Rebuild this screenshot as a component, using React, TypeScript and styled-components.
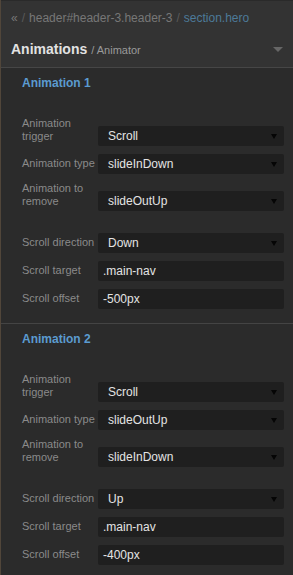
import * as React from "react";
import styled, { createGlobalStyle } from "styled-components";

const GlobalStyle = createGlobalStyle`
  html, body {
    margin: 0;
    padding: 0;
    background: #2b2b2b;
  }
  body {
    font-family: "Liberation Sans", Arial, sans-serif;
  }
`;

const Panel = styled.div`
  width: 293px;
  min-height: 575px;
  box-sizing: border-box;
  background: #2b2b2b;
  border-left: 1px solid #51463a;
`;

const Header = styled.div`
  background: #333333;
  border-top: 1px solid #2a2a2a;
  border-bottom: 1px solid #464646;
  padding: 9px 10px 0 10px;
  height: 57px;
`;

const Crumbs = styled.div`
  font-size: 12px;
  line-height: 16px;
  color: #777;
  white-space: nowrap;
`;

const Sep = styled.span`
  color: #5a5a5a;
  margin: 0 4px;
`;

const Current = styled.span`
  color: #4d7a99;
`;

const TitleRow = styled.div`
  display: flex;
  align-items: center;
  justify-content: space-between;
  margin-top: 14px;
`;

const Title = styled.div`
  font-size: 14px;
  font-weight: bold;
  color: #e2e2e2;
  line-height: 18px;
`;

const Sub = styled.span`
  font-size: 11px;
  font-weight: normal;
  color: #9a9a9a;
  margin-left: 4px;
`;

const Caret = styled.div`
  width: 0;
  height: 0;
  border-left: 5px solid transparent;
  border-right: 5px solid transparent;
  border-top: 5px solid #666;
`;

const Section = styled.section<{ $last?: boolean }>`
  padding: 7px 9px 14px 21px;
  border-bottom: ${(p) => (p.$last ? "none" : "1px solid #444")};
`;

const Heading = styled.h3`
  margin: 0 0 26px 0;
  font-size: 12px;
  line-height: 16px;
  font-weight: bold;
  color: #5b9bd0;
`;

const Rows = styled.div`
  display: flex;
  flex-direction: column;
  gap: 8px;
`;

const Spacer = styled.div`
  height: 6px;
`;

const Row = styled.div`
  display: flex;
  align-items: flex-end;
`;

const Label = styled.div<{ $wrap?: boolean }>`
  width: 76px;
  flex: none;
  font-size: 11px;
  line-height: 13px;
  color: #8a8a8a;
  padding-bottom: ${(p) => (p.$wrap ? "3px" : "4px")};
  white-space: ${(p) => (p.$wrap ? "normal" : "nowrap")};
`;

const Field = styled.div<{ $select?: boolean }>`
  flex: 1;
  height: 20px;
  box-sizing: border-box;
  background: #1f1f1f;
  border-radius: 2px;
  display: flex;
  align-items: center;
  justify-content: space-between;
  padding: 0 7px 0 ${(p) => (p.$select ? "10px" : "5px")};
  font-size: 12px;
  color: #e4e4e4;
`;

const Arrow = styled.span`
  width: 0;
  height: 0;
  border-left: 3px solid transparent;
  border-right: 3px solid transparent;
  border-top: 5px solid #050505;
`;

type Item = { label: string; value: string; select?: boolean; wrap?: boolean };

const groups = [
  {
    title: "Animation 1",
    top: [
      { label: "Animation trigger", value: "Scroll", select: true, wrap: true },
      { label: "Animation type", value: "slideInDown", select: true },
      { label: "Animation to remove", value: "slideOutUp", select: true, wrap: true },
    ],
    bottom: [
      { label: "Scroll direction", value: "Down", select: true },
      { label: "Scroll target", value: ".main-nav" },
      { label: "Scroll offset", value: "-500px" },
    ],
  },
  {
    title: "Animation 2",
    top: [
      { label: "Animation trigger", value: "Scroll", select: true, wrap: true },
      { label: "Animation type", value: "slideOutUp", select: true },
      { label: "Animation to remove", value: "slideInDown", select: true, wrap: true },
    ],
    bottom: [
      { label: "Scroll direction", value: "Up", select: true },
      { label: "Scroll target", value: ".main-nav" },
      { label: "Scroll offset", value: "-400px" },
    ],
  },
];

const FieldRow = ({ item }: { item: Item }) => (
  <Row>
    <Label $wrap={item.wrap}>{item.label}</Label>
    <Field $select={item.select}>
      <span>{item.value}</span>
      {item.select && <Arrow />}
    </Field>
  </Row>
);

export default function App() {
  return (
    <Panel>
      <GlobalStyle />
      <Header>
        <Crumbs>
          «<Sep>/</Sep>header#header-3.header-3<Sep>/</Sep>
          <Current>section.hero</Current>
        </Crumbs>
        <TitleRow>
          <Title>
            Animations<Sub>/ Animator</Sub>
          </Title>
          <Caret />
        </TitleRow>
      </Header>
      {groups.map((g, i) => (
        <Section key={g.title} $last={i === groups.length - 1}>
          <Heading>{g.title}</Heading>
          <Rows>
            {g.top.map((it) => (
              <FieldRow key={it.label} item={it} />
            ))}
            <Spacer />
            {g.bottom.map((it) => (
              <FieldRow key={it.label} item={it} />
            ))}
          </Rows>
        </Section>
      ))}
    </Panel>
  );
}
